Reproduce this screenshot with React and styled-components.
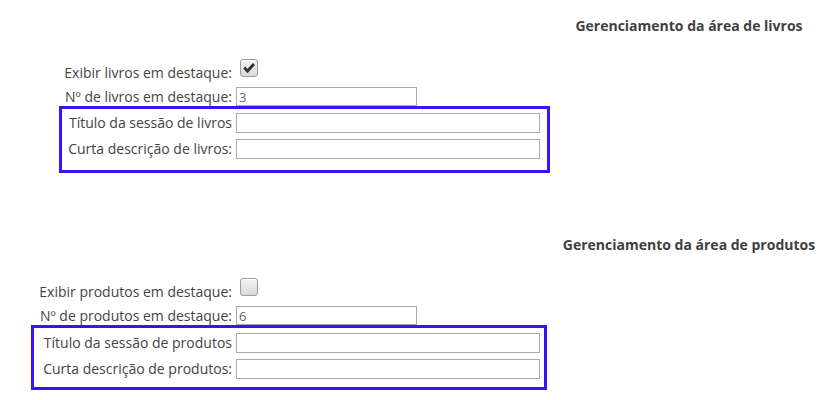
import React from "react";
import styled, { createGlobalStyle } from "styled-components";

const Global = createGlobalStyle`
  html, body { margin: 0; padding: 0; background: #fff; }
  body {
    font-family: "Open Sans", "Liberation Sans", sans-serif;
    font-size: 14px;
    color: #444;
  }
`;

const Page = styled.div`
  width: 833px;
  height: 400px;
  overflow: hidden;
  padding-top: 16px;
  box-sizing: border-box;
`;

const Section = styled.section`
  margin-top: ${(p) => p.$top}px;
`;

const Heading = styled.h3`
  margin: 0 0 23px 545px;
  width: 288px;
  text-align: center;
  font-size: 14px;
  font-weight: 700;
  line-height: 20px;
  color: #3f3f3f;
`;

const Row = styled.div`
  display: flex;
  align-items: ${(p) => (p.$check ? "flex-start" : "center")};
  height: ${(p) => p.$h}px;
  gap: 4px;
`;

const Label = styled.label`
  width: ${(p) => p.$w}px;
  flex: none;
  text-align: right;
  line-height: 20px;
  white-space: nowrap;
  align-self: center;
`;

const TextInput = styled.input`
  box-sizing: border-box;
  width: ${(p) => p.$w}px;
  height: ${(p) => p.$h}px;
  margin: 0;
  padding: 0 2px;
  border: 1px solid #a9a9a9;
  background: #fff;
  font-family: "Open Sans", "Liberation Sans", sans-serif;
  font-size: 13px;
  color: #666;
  outline: none;
`;

const CheckBox = styled.span`
  box-sizing: border-box;
  display: flex;
  align-items: center;
  justify-content: center;
  width: 18px;
  height: 18px;
  margin-left: 4px;
  border: 1px solid #9d9d9d;
  border-radius: 3px;
  background: linear-gradient(#f4f4f4, #d9d9d9);
  box-shadow: inset 0 1px 0 #fff;
`;

const Highlight = styled.div`
  box-sizing: border-box;
  margin-left: ${(p) => p.$left}px;
  width: ${(p) => p.$width}px;
  border: 3px solid #3a12ff;
  padding: ${(p) => p.$pt}px 0 ${(p) => p.$pb}px 0;
  display: flex;
  flex-direction: column;
  gap: 6px;
`;

function Check({ checked }) {
  return (
    <CheckBox>
      {checked && (
        <svg width="14" height="12" viewBox="0 0 14 12">
          <path
            d="M1.2 6.6 L3.4 4.6 L5.4 7.0 L10.9 0.9 L13 2.9 L5.5 11.2 Z"
            fill="#333"
          />
        </svg>
      )}
    </CheckBox>
  );
}

function Area({ top, title, item, checked, count, box }) {
  const inner = 232 - (box.left + 3);
  return (
    <Section $top={top}>
      <Heading>{title}</Heading>
      <Row $h={28} $check>
        <Label $w={232}>Exibir {item} em destaque:</Label>
        <Check checked={checked} />
      </Row>
      <Row $h={19}>
        <Label $w={232}>Nº de {item} em destaque:</Label>
        <TextInput $w={181} $h={19} defaultValue={count} />
      </Row>
      <Highlight $left={box.left} $width={box.width} $pt={box.pt} $pb={box.pb}>
        <Row $h={20}>
          <Label $w={inner}>Título da sessão de {item}</Label>
          <TextInput $w={304} $h={20} />
        </Row>
        <Row $h={20}>
          <Label $w={inner}>Curta descrição de {item}:</Label>
          <TextInput $w={304} $h={20} />
        </Row>
      </Highlight>
    </Section>
  );
}

export default function App() {
  return (
    <Page>
      <Global />
      <Area
        top={0}
        title="Gerenciamento da área de livros"
        item="livros"
        checked
        count="3"
        box={{ left: 59, width: 491, pt: 4, pb: 11 }}
      />
      <Area
        top={62}
        title="Gerenciamento da área de produtos"
        item="produtos"
        checked={false}
        count="6"
        box={{ left: 31, width: 516, pt: 5, pb: 8 }}
      />
    </Page>
  );
}
